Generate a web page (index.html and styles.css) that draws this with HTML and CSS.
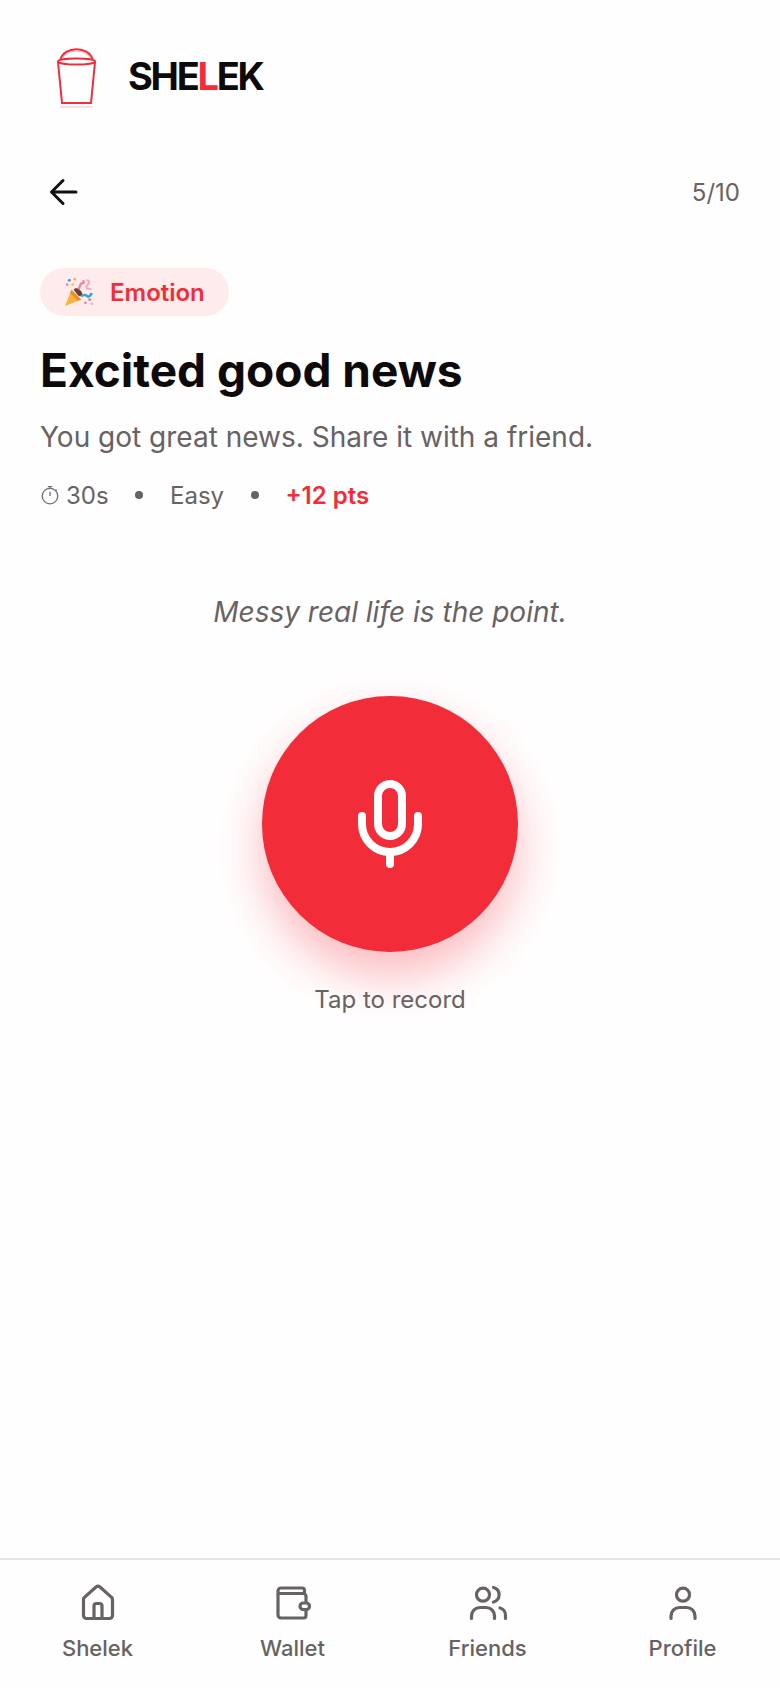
FILE: index.html
```html
<!DOCTYPE html>
<html>
<head>
<title>Shelek</title>
<link rel="stylesheet" href="styles.css">
</head>
<body>
  <div id="app">
    <div id="header">
      <svg class="logo-cup" viewBox="0 0 50 66" width="50" height="66">
        <path d="M8.500 15a16.500 13 0 0 1 32 0" fill="none" stroke="#f22c38" stroke-width="2"/>
        <path d="M10.500 16a14 9 0 0 1 28 0" fill="none" stroke="#f9a9ae" stroke-width="1"/>
        <ellipse cx="24.500" cy="17.500" rx="18.500" ry="3" fill="none" stroke="#f22c38" stroke-width="2"/>
        <path d="M6 18l4 41h29l4-41" fill="none" stroke="#f22c38" stroke-width="2"/>
        <path d="M8 63h33" stroke="#fbdfe0" stroke-width="2"/>
      </svg>
      <div class="logo-text">SHE<span>L</span>EK</div>
    </div>

    <div id="top-row">
      <svg class="back-icon" viewBox="0 0 30 30" width="30" height="30">
        <path d="M27 15H3M14 3.500L2.500 15 14 26.500" fill="none" stroke="#111" stroke-width="3" stroke-linecap="round" stroke-linejoin="round"/>
      </svg>
      <span class="progress">5/10</span>
    </div>

    <div id="main-content">
      <div class="pill">
        <svg class="popper" viewBox="0 0 28 28" width="30" height="30">
          <path d="M1 27l6-15 9 9z" fill="#fbb33c"/>
          <path d="M7 12l9 9-3 1.500-7.500-7.500z" fill="#e8912c"/>
          <path d="M9 12c2-3 6-1 8 3 1 3-2 4-4 2z" fill="#6b3f35"/>
          <path d="M13 11c3-1 1-4 3-5s3 1 2-3" fill="none" stroke="#ef7c9c" stroke-width="2"/>
          <path d="M16 18c3-2 5-1 6 0s3-1 4-3" fill="none" stroke="#2fa8d8" stroke-width="2.400"/>
          <path d="M21 3c2 0 3 1 2 3s-3 2-2 4 4 0 4 2" fill="none" stroke="#f6a8bd" stroke-width="2"/>
          <circle cx="5" cy="3" r="1.400" fill="#2fa8d8"/>
          <circle cx="10" cy="2" r="1.200" fill="#fbb33c"/>
          <circle cx="8" cy="7" r="1.200" fill="#fbb33c"/>
          <circle cx="3" cy="7" r="1.200" fill="#ef7c9c"/>
          <circle cx="24" cy="21" r="1.400" fill="#ef7c9c"/>
          <circle cx="20" cy="24" r="1.200" fill="#ef7c9c"/>
          <circle cx="26" cy="25" r="1.200" fill="#f6a8bd"/>
        </svg>
        <span>Emotion</span>
      </div>
      <h1>Excited good news</h1>
      <p class="subtitle">You got great news. Share it with a friend.</p>
      <div class="meta">
        <span class="time">
          <svg viewBox="0 0 18 18" width="20" height="20">
            <circle cx="9" cy="10" r="7" fill="none" stroke="#6d7280" stroke-width="1.200"/>
            <path d="M7 1.500h4M9 1.500v2M9 10V6M14 4l1 1" fill="none" stroke="#6d7280" stroke-width="1.200"/>
          </svg>
          30s
        </span>
        <span class="dot"></span>
        <span>Easy</span>
        <span class="dot"></span>
        <span class="pts">+12 pts</span>
      </div>
    </div>

    <div id="record">
      <p class="hint">Messy real life is the point.</p>
      <button class="mic-btn">
        <svg viewBox="0 2 80 100" width="80" height="100">
          <rect x="28" y="12" width="24" height="52" rx="12" fill="none" stroke="#fff" stroke-width="8"/>
          <path d="M12 44v8a28 28 0 0 0 56 0v-8M40 80v12" fill="none" stroke="#fff" stroke-width="8" stroke-linecap="round"/>
        </svg>
      </button>
      <p class="tap">Tap to record</p>
    </div>

    <div id="nav">
      <div class="nav-item">
        <svg viewBox="0 0 40 40" width="40" height="40">
          <path d="M8.500 36.500h23a3 3 0 0 0 3-3V17.500a3 3 0 0 0-1.200-2.400L22 5a3.200 3.200 0 0 0-4 0L6.700 15.100a3 3 0 0 0-1.200 2.400v16a3 3 0 0 0 3 3zM16 36.500V24a2.500 2.500 0 0 1 2.500-2.500h3A2.500 2.500 0 0 1 24 24v12.500"/>
        </svg>
        <span>Shelek</span>
      </div>
      <div class="nav-item">
        <svg viewBox="0 0 40 40" width="40" height="40">
          <path d="M5 11.500h25a3 3 0 0 1 3 3v19a2.500 2.500 0 0 1-2.500 2.500H8a3 3 0 0 1-3-3V9a3 3 0 0 1 3-3h21a2.500 2.500 0 0 1 2.500 2.500v3"/>
          <rect class="clasp" x="27" y="21" width="9.500" height="6.500" rx="3.250"/>
        </svg>
        <span>Wallet</span>
      </div>
      <div class="nav-item">
        <svg viewBox="0 0 40 40" width="40" height="40">
          <circle cx="15" cy="12.700" r="6.500"/>
          <path d="M25.500 5.500a7.500 7.500 0 0 1 0 14.500M3.500 36.500V34a8.500 8.500 0 0 1 8.500-8.500h6a8.500 8.500 0 0 1 8.500 8.500v2.500M32 26a7.500 7.500 0 0 1 5.500 7.500v3"/>
        </svg>
        <span>Friends</span>
      </div>
      <div class="nav-item">
        <svg viewBox="0 0 40 40" width="40" height="40">
          <circle cx="20" cy="12.700" r="6.500"/>
          <path d="M8 36.500V34a8.500 8.500 0 0 1 8.500-8.500h7A8.500 8.500 0 0 1 32 34v2.500"/>
        </svg>
        <span>Profile</span>
      </div>
    </div>
  </div>
</body>
</html>
```

FILE: styles.css
```css
body {
  font-family: Inter, sans-serif;
  background-color: #fffefe;
  color: #676264;
  margin: 0;
  padding: 0;
}

#app {
  display: flex;
  flex-direction: column;
  height: 1688px;
  overflow: hidden;
}

#header {
  display: flex;
  align-items: center;
  gap: 26px;
  padding: 44px 40px 0 52px;
  height: 66px;
}

.logo-text {
  font-size: 38px;
  font-weight: 700;
  letter-spacing: -2.3px;
  color: #0e0a0b;
  margin-top: -2px;
}

.logo-text span {
  color: #f22c38;
}

#top-row {
  display: flex;
  justify-content: space-between;
  align-items: center;
  padding: 0 40px 0 49px;
  margin-top: 67px;
  height: 30px;
}

.progress {
  font-size: 24px;
}

#main-content {
  padding: 0 40px;
  margin-top: 61px;
}

.pill {
  display: inline-flex;
  align-items: center;
  gap: 16px;
  height: 48px;
  padding: 0 24px;
  border-radius: 24px;
  background-color: #feecec;
  color: #f22c38;
  font-size: 24px;
  font-weight: 600;
}

h1 {
  font-size: 46px;
  font-weight: 700;
  line-height: 56px;
  color: #0e0a0b;
  margin: 26px 0 0;
}

.subtitle {
  font-size: 28px;
  line-height: 40px;
  margin: 19px 0 0;
}

.meta {
  display: flex;
  align-items: center;
  gap: 26.7px;
  font-size: 24px;
  margin-top: 22px;
  height: 32px;
}

.time {
  display: flex;
  align-items: center;
  gap: 6px;
}

.dot {
  width: 8px;
  height: 8px;
  border-radius: 50%;
  background-color: #676264;
}

.pts {
  color: #f22c38;
  font-weight: 600;
}

#record {
  display: flex;
  flex-direction: column;
  align-items: center;
  margin-top: 81px;
}

.hint {
  font-size: 28px;
  font-style: italic;
  line-height: 40px;
  margin: 0;
}

.mic-btn {
  display: flex;
  align-items: center;
  justify-content: center;
  width: 256px;
  height: 256px;
  margin-top: 64px;
  border: none;
  border-radius: 50%;
  background-color: #f22c38;
  box-shadow: 0 24px 48px rgba(242, 44, 56, 0.32);
}

.tap {
  font-size: 24px;
  line-height: 32px;
  margin: 32px 0 0;
}

#nav {
  display: grid;
  grid-template-columns: repeat(4, 1fr);
  margin-top: auto;
  height: 128px;
  border-top: 2px solid #e8e4e6;
}

.nav-item {
  display: flex;
  flex-direction: column;
  align-items: center;
  padding-top: 22px;
  font-size: 22px;
  font-weight: 500;
}

.nav-item span {
  margin-top: 13px;
}

.nav-item svg {
  fill: none;
  stroke: #676264;
  stroke-width: 3.2;
  stroke-linecap: round;
  stroke-linejoin: round;
}

.nav-item .clasp {
  fill: #fffefe;
}
```
